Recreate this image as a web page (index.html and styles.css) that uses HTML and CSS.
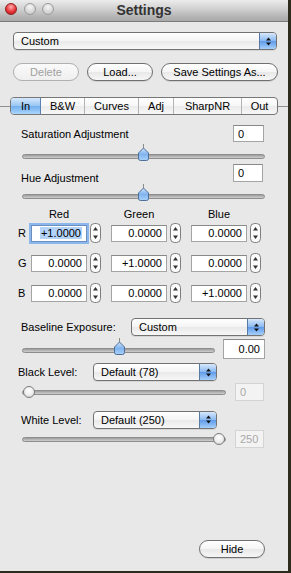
FILE: index.html
```html
<!DOCTYPE html>
<html lang="en">
<head>
    <meta charset="UTF-8" />
    <title>Settings</title>
    <link rel="stylesheet" href="styles.css">
</head>
<body>
<div class="window">
    <div class="titlebar">
        <div class="lights">
            <span class="light close"></span>
            <span class="light"></span>
            <span class="light"></span>
        </div>
        <div class="title">Settings</div>
        <div></div>
    </div>

    <div class="popup preset">
        <span class="popup-text">Custom</span>
        <span class="popup-cap"><svg width="7" height="9" viewBox="0 0 7 9"><path d="M3.5 0.5 L6 3.5 L1 3.5 Z M1 5.5 L6 5.5 L3.5 8.5 Z" fill="#111"/></svg></span>
    </div>

    <div class="button-row">
        <button class="pill delete" disabled>Delete</button>
        <button class="pill load">Load...</button>
        <button class="pill save">Save Settings As...</button>
    </div>

    <div class="tab-row">
        <span class="tab-line left"></span>
        <div class="tabs">
            <span class="tab active t-in">In</span>
            <span class="tab t-bw">B&amp;W</span>
            <span class="tab t-curves">Curves</span>
            <span class="tab t-adj">Adj</span>
            <span class="tab t-sharp">SharpNR</span>
            <span class="tab t-out">Out</span>
        </div>
        <span class="tab-line"></span>
    </div>

    <div class="field-row sat-row">
        <span>Saturation Adjustment</span>
        <span class="num short">0</span>
    </div>
    <div class="slider full">
        <div class="track"></div>
        <svg class="thumb" style="left: 115px" width="13" height="18" viewBox="0 0 13 18">
            <defs>
                <linearGradient id="blue1" x1="0" y1="0" x2="0" y2="1">
                    <stop offset="0" stop-color="#d3e6fb"/>
                    <stop offset="0.5" stop-color="#7fb3ee"/>
                    <stop offset="1" stop-color="#a9d2fb"/>
                </linearGradient>
            </defs>
            <line x1="6.5" y1="0" x2="6.5" y2="4" stroke="#8a8a8a"/>
            <path d="M6.5 4 L11.5 9 L11.5 14.5 Q11.5 16.5 9.5 16.5 L3.5 16.5 Q1.5 16.5 1.5 14.5 L1.5 9 Z" fill="url(#blue1)" stroke="#4f6f99"/>
        </svg>
    </div>

    <div class="field-row hue-row">
        <span class="low">Hue Adjustment</span>
        <span class="num short">0</span>
    </div>
    <div class="slider full">
        <div class="track"></div>
        <svg class="thumb" style="left: 115px" width="13" height="18" viewBox="0 0 13 18">
            <line x1="6.5" y1="0" x2="6.5" y2="4" stroke="#8a8a8a"/>
            <path d="M6.5 4 L11.5 9 L11.5 14.5 Q11.5 16.5 9.5 16.5 L3.5 16.5 Q1.5 16.5 1.5 14.5 L1.5 9 Z" fill="url(#blue1)" stroke="#4f6f99"/>
        </svg>
    </div>

    <div class="matrix-head">
        <span class="row-label"></span>
        <span class="col-head">Red</span>
        <span class="col-head">Green</span>
        <span class="col-head">Blue</span>
    </div>

    <div class="matrix-row">
        <span class="row-label">R</span>
        <div class="cell"><span class="num wide focused"><span class="selected">+1.0000</span></span><svg class="stepper" width="11" height="20" viewBox="0 0 11 20"><rect x="0.5" y="0.5" width="10" height="19" rx="4" fill="#fbfbfb" stroke="#7d7d7d"/><path d="M5.5 4 L8 7.5 L3 7.5 Z M3 12.5 L8 12.5 L5.5 16 Z" fill="#333"/></svg></div>
        <div class="cell"><span class="num wide">0.0000</span><svg class="stepper" width="11" height="20" viewBox="0 0 11 20"><rect x="0.5" y="0.5" width="10" height="19" rx="4" fill="#fbfbfb" stroke="#7d7d7d"/><path d="M5.5 4 L8 7.5 L3 7.5 Z M3 12.5 L8 12.5 L5.5 16 Z" fill="#333"/></svg></div>
        <div class="cell"><span class="num wide">0.0000</span><svg class="stepper" width="11" height="20" viewBox="0 0 11 20"><rect x="0.5" y="0.5" width="10" height="19" rx="4" fill="#fbfbfb" stroke="#7d7d7d"/><path d="M5.5 4 L8 7.5 L3 7.5 Z M3 12.5 L8 12.5 L5.5 16 Z" fill="#333"/></svg></div>
    </div>
    <div class="matrix-row">
        <span class="row-label">G</span>
        <div class="cell"><span class="num wide">0.0000</span><svg class="stepper" width="11" height="20" viewBox="0 0 11 20"><rect x="0.5" y="0.5" width="10" height="19" rx="4" fill="#fbfbfb" stroke="#7d7d7d"/><path d="M5.5 4 L8 7.5 L3 7.5 Z M3 12.5 L8 12.5 L5.5 16 Z" fill="#333"/></svg></div>
        <div class="cell"><span class="num wide">+1.0000</span><svg class="stepper" width="11" height="20" viewBox="0 0 11 20"><rect x="0.5" y="0.5" width="10" height="19" rx="4" fill="#fbfbfb" stroke="#7d7d7d"/><path d="M5.5 4 L8 7.5 L3 7.5 Z M3 12.5 L8 12.5 L5.5 16 Z" fill="#333"/></svg></div>
        <div class="cell"><span class="num wide">0.0000</span><svg class="stepper" width="11" height="20" viewBox="0 0 11 20"><rect x="0.5" y="0.5" width="10" height="19" rx="4" fill="#fbfbfb" stroke="#7d7d7d"/><path d="M5.5 4 L8 7.5 L3 7.5 Z M3 12.5 L8 12.5 L5.5 16 Z" fill="#333"/></svg></div>
    </div>
    <div class="matrix-row">
        <span class="row-label">B</span>
        <div class="cell"><span class="num wide">0.0000</span><svg class="stepper" width="11" height="20" viewBox="0 0 11 20"><rect x="0.5" y="0.5" width="10" height="19" rx="4" fill="#fbfbfb" stroke="#7d7d7d"/><path d="M5.5 4 L8 7.5 L3 7.5 Z M3 12.5 L8 12.5 L5.5 16 Z" fill="#333"/></svg></div>
        <div class="cell"><span class="num wide">0.0000</span><svg class="stepper" width="11" height="20" viewBox="0 0 11 20"><rect x="0.5" y="0.5" width="10" height="19" rx="4" fill="#fbfbfb" stroke="#7d7d7d"/><path d="M5.5 4 L8 7.5 L3 7.5 Z M3 12.5 L8 12.5 L5.5 16 Z" fill="#333"/></svg></div>
        <div class="cell"><span class="num wide">+1.0000</span><svg class="stepper" width="11" height="20" viewBox="0 0 11 20"><rect x="0.5" y="0.5" width="10" height="19" rx="4" fill="#fbfbfb" stroke="#7d7d7d"/><path d="M5.5 4 L8 7.5 L3 7.5 Z M3 12.5 L8 12.5 L5.5 16 Z" fill="#333"/></svg></div>
    </div>

    <div class="field-row baseline-row">
        <span>Baseline Exposure:</span>
        <div class="popup baseline">
            <span class="popup-text">Custom</span>
            <span class="popup-cap"><svg width="7" height="9" viewBox="0 0 7 9"><path d="M3.5 0.5 L6 3.5 L1 3.5 Z M1 5.5 L6 5.5 L3.5 8.5 Z" fill="#111"/></svg></span>
        </div>
    </div>
    <div class="slider-row exposure">
        <div class="slider">
            <div class="track"></div>
            <svg class="thumb" style="left: 91px" width="13" height="18" viewBox="0 0 13 18">
                <line x1="6.5" y1="0" x2="6.5" y2="4" stroke="#8a8a8a"/>
                <path d="M6.5 4 L11.5 9 L11.5 14.5 Q11.5 16.5 9.5 16.5 L3.5 16.5 Q1.5 16.5 1.5 14.5 L1.5 9 Z" fill="url(#blue1)" stroke="#4f6f99"/>
            </svg>
        </div>
        <span class="num exp">0.00</span>
    </div>

    <div class="field-row level-row black">
        <span class="level-label">Black Level:</span>
        <div class="popup level">
            <span class="popup-text">Default (78)</span>
            <span class="popup-cap"><svg width="7" height="9" viewBox="0 0 7 9"><path d="M3.5 0.5 L6 3.5 L1 3.5 Z M1 5.5 L6 5.5 L3.5 8.5 Z" fill="#111"/></svg></span>
        </div>
    </div>
    <div class="slider-row level-slider">
        <div class="slider">
            <div class="track"></div>
            <span class="knob" style="left: 1px"></span>
        </div>
        <span class="num off">0</span>
    </div>

    <div class="field-row level-row white">
        <span class="level-label">White Level:</span>
        <div class="popup level">
            <span class="popup-text">Default (250)</span>
            <span class="popup-cap"><svg width="7" height="9" viewBox="0 0 7 9"><path d="M3.5 0.5 L6 3.5 L1 3.5 Z M1 5.5 L6 5.5 L3.5 8.5 Z" fill="#111"/></svg></span>
        </div>
    </div>
    <div class="slider-row level-slider">
        <div class="slider">
            <div class="track"></div>
            <span class="knob" style="left: 191px"></span>
        </div>
        <span class="num off">250</span>
    </div>

    <div class="hide-row">
        <button class="pill hide">Hide</button>
    </div>
</div>
</body>
</html>
```

FILE: styles.css
```css
* {
    box-sizing: border-box;
}
body {
    margin: 0;
    background-color: #2e2c1d;
    font-family: "Liberation Sans", Arial, sans-serif;
    font-size: 11px;
    color: #000;
}
.window {
    width: 288px;
    height: 571px;
    background-color: #e8e8e8;
    display: flex;
    flex-direction: column;
}

/* title bar */
.titlebar {
    height: 22px;
    flex: none;
    display: grid;
    grid-template-columns: 1fr auto 1fr;
    background: linear-gradient(#ececec, #cfcfcf 45%, #b4b4b4 80%, #a8a8a8);
    border-bottom: 1px solid #7c7c7c;
}
.lights {
    display: flex;
    gap: 6.5px;
    padding: 3px 0 0 5px;
}
.light {
    width: 12px;
    height: 12px;
    border-radius: 50%;
    border: 1px solid #9a9a9a;
    background: radial-gradient(circle at 50% 30%, #f6f6f6, #d6d6d6 60%, #c2c2c2);
}
.light.close {
    border-color: #8e1f1f;
    background: radial-gradient(circle at 50% 30%, #ffb0b0, #e8363b 55%, #b3141a);
}
.title {
    font-weight: bold;
    font-size: 14px;
    color: #333;
    line-height: 21px;
}

/* popup buttons */
.popup {
    height: 18px;
    display: flex;
    align-items: center;
    border: 1px solid #727272;
    border-radius: 4px;
    background: linear-gradient(#ffffff, #f4f4f4 50%, #e9e9e9 51%, #f7f7f7);
    box-shadow: 0 1px 0 rgba(0, 0, 0, 0.08);
}
.popup-text {
    flex: 1;
    padding-left: 7px;
}
.popup-cap {
    width: 17px;
    height: 100%;
    display: flex;
    align-items: center;
    justify-content: center;
    border-left: 1px solid #5a7aa6;
    border-radius: 0 3px 3px 0;
    background: linear-gradient(#d7e8fc, #88b8f0 50%, #5f9ae9 51%, #a6d0fa);
}
.preset {
    margin: 10px 11px 0 13px;
}

/* push buttons */
.button-row {
    display: flex;
    gap: 8px;
    margin: 13px 0 0 13px;
}
.pill {
    height: 18px;
    padding: 0;
    font-family: inherit;
    font-size: 11px;
    color: #000;
    border: 1px solid #707070;
    border-radius: 9px;
    background: linear-gradient(#ffffff, #f5f5f5 50%, #e8e8e8 51%, #f6f6f6);
    box-shadow: 0 1px 0 rgba(0, 0, 0, 0.1);
}
.pill:disabled {
    color: #a0a0a0;
    border-color: #b0b0b0;
    background: linear-gradient(#fafafa, #efefef);
    box-shadow: none;
}
.delete,
.load {
    width: 66px;
}
.save {
    width: 117px;
}

/* tabs */
.tab-row {
    display: flex;
    align-items: center;
    margin-top: 16px;
    height: 18px;
}
.tab-line {
    flex: 1;
    height: 1px;
    background-color: #8f8f8f;
}
.tab-line.left {
    flex: none;
    width: 10px;
}
.tabs {
    display: flex;
    height: 18px;
    border: 1px solid #777;
    border-radius: 4px;
    overflow: hidden;
    background: linear-gradient(#ffffff, #f6f6f6 50%, #ebebeb 51%, #f7f7f7);
}
.tab {
    display: flex;
    align-items: center;
    justify-content: center;
    border-left: 1px solid #b4b4b4;
}
.tab:first-child {
    border-left: none;
}
.tab.active {
    background: linear-gradient(#d5e8fc, #98c6f4 50%, #72aeee 51%, #a9d5fb);
    border-right: 1px solid #5c82b0;
}
.tab.active + .tab {
    border-left: none;
}
.t-in { width: 30px; }
.t-bw { width: 43px; }
.t-curves { width: 54px; }
.t-adj { width: 35px; }
.t-sharp { width: 68px; }
.t-out { width: 36px; }

/* text fields */
.num {
    display: flex;
    align-items: center;
    background-color: #fff;
    border: 1px solid #a4a4a4;
    border-top-color: #888;
    padding: 0 4px;
}
.num.short {
    width: 31px;
}
.num.wide {
    width: 56px;
    height: 17px;
    justify-content: flex-end;
}
.num.focused {
    border-color: #6c8fc0;
    box-shadow: 0 0 0 2px #8ab7ec;
}
.selected {
    background-color: #b3d3fb;
    padding: 0 1px;
}

.field-row {
    display: flex;
    align-items: center;
    justify-content: space-between;
    padding: 0 24px 0 21px;
}
.sat-row {
    margin-top: 10px;
    height: 17px;
}
.sat-row .num {
    height: 17px;
}
.hue-row {
    margin-top: 2px;
    height: 18px;
}
.hue-row .num {
    height: 18px;
    width: 30px;
    margin-right: 1px;
}
.hue-row .low {
    align-self: flex-end;
    margin-bottom: -2px;
}

/* sliders */
.slider {
    position: relative;
    height: 20px;
}
.slider.full {
    margin: 0 23px 0 22px;
}
.track {
    position: absolute;
    left: 0;
    right: 0;
    top: 12px;
    height: 5px;
    border-radius: 3px;
    border: 1px solid #8d8d8d;
    background: linear-gradient(#9c9c9c, #cfcfcf);
}
.thumb {
    position: absolute;
    top: 2px;
}
.knob {
    position: absolute;
    top: 8px;
    width: 12px;
    height: 12px;
    border-radius: 50%;
    border: 1px solid #7b7b7b;
    background: radial-gradient(circle at 50% 35%, #ffffff, #ececec 55%, #c9c9c9);
}

/* colour matrix */
.matrix-head,
.matrix-row {
    display: flex;
    align-items: center;
    gap: 10px;
    padding-left: 18px;
}
.matrix-head {
    margin-top: 5px;
    height: 14px;
}
.row-label {
    width: 3px;
}
.col-head {
    width: 70px;
    padding-right: 14px;
    text-align: center;
}
.matrix-row {
    height: 20px;
    margin-top: 10px;
}
.matrix-head + .matrix-row {
    margin-top: 2px;
}
.cell {
    display: flex;
    align-items: center;
    gap: 3px;
}

/* exposure and levels */
.baseline-row {
    margin-top: 15px;
    height: 18px;
    padding-right: 23px;
}
.popup.baseline {
    width: 134px;
}
.slider-row {
    display: flex;
    align-items: center;
    padding-left: 22px;
}
.slider-row .slider {
    flex: 1;
}
.exposure {
    margin-top: 3px;
    height: 20px;
    gap: 8px;
    padding-right: 23px;
}
.exposure .slider {
    top: -3px;
}
.num.exp {
    width: 42px;
    height: 20px;
    justify-content: flex-end;
}
.level-row {
    justify-content: flex-start;
    height: 18px;
    margin-top: 4px;
}
.level-row.black {
    padding-left: 18px;
}
.level-row.white {
    margin-top: 10px;
    height: 17px;
}
.level-label {
    width: 72px;
}
.level-row.black .level-label {
    width: 75px;
}
.popup.level {
    width: 124px;
}
.level-slider {
    margin-top: 2px;
    height: 18px;
    gap: 9px;
    padding-right: 24px;
}
.level-slider .slider {
    top: -4px;
}
.num.off {
    width: 29px;
    height: 18px;
    color: #a9a9a9;
    border-color: #d4d4d4;
    background-color: #f3f3f3;
}

.hide-row {
    margin: auto 0 13px 199px;
}
.hide {
    width: 66px;
}
```
